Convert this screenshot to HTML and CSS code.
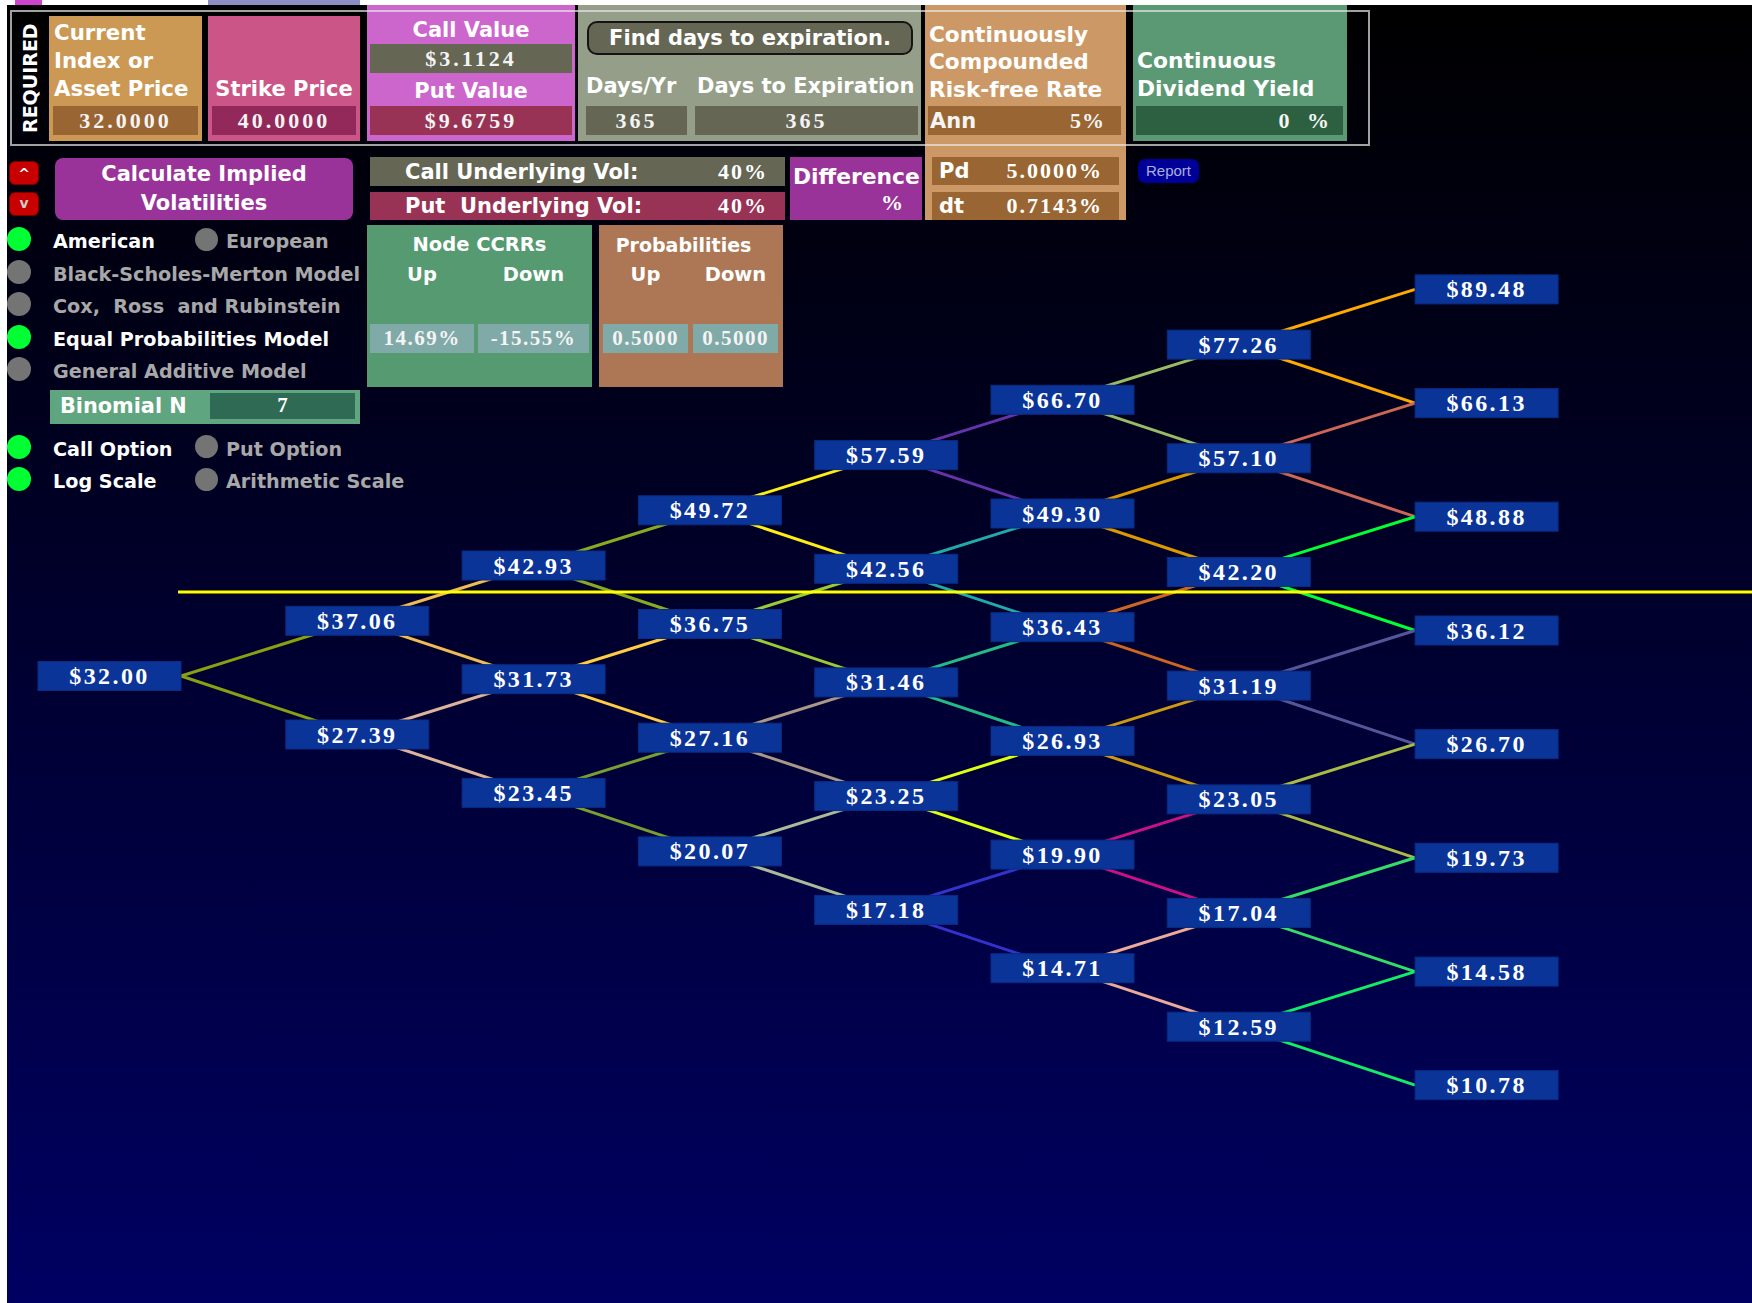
FILE: index.html
```
<html charset="utf-8">
  <head>
    <title>Binomial Option Tree</title>
    <link rel="stylesheet" href="styles.css">
  </head>
  <body>
    <div class="topstrip"><span class="stub stub-mag"></span><span class="stub stub-lav"></span></div>
    <div class="stage">
      <svg class="tree" viewBox="7 5 1745 1298" width="1745" height="1298">
        <g class="edges">
          <polyline stroke="#88a012" points="357.3,620.8 181,676 357.3,734.5"/>
          <polyline stroke="#eebb55" points="533.6,565.5 357.3,620.8 533.6,679.2"/>
          <polyline stroke="#ddb39c" points="533.6,679.2 357.3,734.5 533.6,792.9"/>
          <polyline stroke="#88aa22" points="709.9,510.3 533.6,565.5 709.9,624"/>
          <polyline stroke="#ffcc44" points="709.9,624 533.6,679.2 709.9,737.7"/>
          <polyline stroke="#77a030" points="709.9,737.7 533.6,792.9 709.9,851.4"/>
          <polyline stroke="#ffee11" points="886.2,455.1 709.9,510.3 886.2,568.8"/>
          <polyline stroke="#99cc33" points="886.2,568.8 709.9,624 886.2,682.4"/>
          <polyline stroke="#aa9988" points="886.2,682.4 709.9,737.7 886.2,796.1"/>
          <polyline stroke="#aabb99" points="886.2,796.1 709.9,851.4 886.2,909.9"/>
          <polyline stroke="#6633aa" points="1062.5,399.8 886.2,455.1 1062.5,513.5"/>
          <polyline stroke="#22aaaa" points="1062.5,513.5 886.2,568.8 1062.5,627.2"/>
          <polyline stroke="#22bb88" points="1062.5,627.2 886.2,682.4 1062.5,740.9"/>
          <polyline stroke="#ddff11" points="1062.5,740.9 886.2,796.1 1062.5,854.6"/>
          <polyline stroke="#3333cc" points="1062.5,854.6 886.2,909.9 1062.5,968.2"/>
          <polyline stroke="#99bb66" points="1238.8,344.6 1062.5,399.8 1238.8,458.3"/>
          <polyline stroke="#dd9900" points="1238.8,458.3 1062.5,513.5 1238.8,572"/>
          <polyline stroke="#cc6622" points="1238.8,572 1062.5,627.2 1238.8,685.6"/>
          <polyline stroke="#cc9911" points="1238.8,685.6 1062.5,740.9 1238.8,799.4"/>
          <polyline stroke="#cc1188" points="1238.8,799.4 1062.5,854.6 1238.8,912.9"/>
          <polyline stroke="#eeaa99" points="1238.8,912.9 1062.5,968.2 1238.8,1026.7"/>
          <polyline stroke="#ffaa00" points="1415.1,289.4 1238.8,344.6 1415.1,403.1"/>
          <polyline stroke="#cc6655" points="1415.1,403.1 1238.8,458.3 1415.1,516.7"/>
          <polyline stroke="#00ff33" points="1415.1,516.7 1238.8,572 1415.1,630.5"/>
          <polyline stroke="#555599" points="1415.1,630.5 1238.8,685.6 1415.1,744.1"/>
          <polyline stroke="#aabb44" points="1415.1,744.1 1238.8,799.4 1415.1,857.8"/>
          <polyline stroke="#33dd66" points="1415.1,857.8 1238.8,912.9 1415.1,971.6"/>
          <polyline stroke="#11ee66" points="1415.1,971.6 1238.8,1026.7 1415.1,1085.1"/>
        </g>
        <line class="strike" x1="178" y1="592" x2="1752" y2="592"/>
        <g class="nodes">
          <g transform="translate(109.5,676)"><rect x="-71.5" y="-14.5" width="143" height="29"/><text y="8">$32.00</text></g>

          <g transform="translate(357.3,620.8)"><rect x="-71.5" y="-14.5" width="143" height="29"/><text y="8">$37.06</text></g>
          <g transform="translate(357.3,734.5)"><rect x="-71.5" y="-14.5" width="143" height="29"/><text y="8">$27.39</text></g>

          <g transform="translate(533.6,565.5)"><rect x="-71.5" y="-14.5" width="143" height="29"/><text y="8">$42.93</text></g>
          <g transform="translate(533.6,679.2)"><rect x="-71.5" y="-14.5" width="143" height="29"/><text y="8">$31.73</text></g>
          <g transform="translate(533.6,792.9)"><rect x="-71.5" y="-14.5" width="143" height="29"/><text y="8">$23.45</text></g>

          <g transform="translate(709.9,510.3)"><rect x="-71.5" y="-14.5" width="143" height="29"/><text y="8">$49.72</text></g>
          <g transform="translate(709.9,624)"><rect x="-71.5" y="-14.5" width="143" height="29"/><text y="8">$36.75</text></g>
          <g transform="translate(709.9,737.7)"><rect x="-71.5" y="-14.5" width="143" height="29"/><text y="8">$27.16</text></g>
          <g transform="translate(709.9,851.4)"><rect x="-71.5" y="-14.5" width="143" height="29"/><text y="8">$20.07</text></g>

          <g transform="translate(886.2,455.1)"><rect x="-71.5" y="-14.5" width="143" height="29"/><text y="8">$57.59</text></g>
          <g transform="translate(886.2,568.8)"><rect x="-71.5" y="-14.5" width="143" height="29"/><text y="8">$42.56</text></g>
          <g transform="translate(886.2,682.4)"><rect x="-71.5" y="-14.5" width="143" height="29"/><text y="8">$31.46</text></g>
          <g transform="translate(886.2,796.1)"><rect x="-71.5" y="-14.5" width="143" height="29"/><text y="8">$23.25</text></g>
          <g transform="translate(886.2,909.9)"><rect x="-71.5" y="-14.5" width="143" height="29"/><text y="8">$17.18</text></g>

          <g transform="translate(1062.5,399.8)"><rect x="-71.5" y="-14.5" width="143" height="29"/><text y="8">$66.70</text></g>
          <g transform="translate(1062.5,513.5)"><rect x="-71.5" y="-14.5" width="143" height="29"/><text y="8">$49.30</text></g>
          <g transform="translate(1062.5,627.2)"><rect x="-71.5" y="-14.5" width="143" height="29"/><text y="8">$36.43</text></g>
          <g transform="translate(1062.5,740.9)"><rect x="-71.5" y="-14.5" width="143" height="29"/><text y="8">$26.93</text></g>
          <g transform="translate(1062.5,854.6)"><rect x="-71.5" y="-14.5" width="143" height="29"/><text y="8">$19.90</text></g>
          <g transform="translate(1062.5,968.2)"><rect x="-71.5" y="-14.5" width="143" height="29"/><text y="8">$14.71</text></g>

          <g transform="translate(1238.8,344.6)"><rect x="-71.5" y="-14.5" width="143" height="29"/><text y="8">$77.26</text></g>
          <g transform="translate(1238.8,458.3)"><rect x="-71.5" y="-14.5" width="143" height="29"/><text y="8">$57.10</text></g>
          <g transform="translate(1238.8,572)"><rect x="-71.5" y="-14.5" width="143" height="29"/><text y="8">$42.20</text></g>
          <g transform="translate(1238.8,685.6)"><rect x="-71.5" y="-14.5" width="143" height="29"/><text y="8">$31.19</text></g>
          <g transform="translate(1238.8,799.4)"><rect x="-71.5" y="-14.5" width="143" height="29"/><text y="8">$23.05</text></g>
          <g transform="translate(1238.8,912.9)"><rect x="-71.5" y="-14.5" width="143" height="29"/><text y="8">$17.04</text></g>
          <g transform="translate(1238.8,1026.7)"><rect x="-71.5" y="-14.5" width="143" height="29"/><text y="8">$12.59</text></g>

          <g transform="translate(1486.6,289.4)"><rect x="-71.5" y="-14.5" width="143" height="29"/><text y="8">$89.48</text></g>
          <g transform="translate(1486.6,403.1)"><rect x="-71.5" y="-14.5" width="143" height="29"/><text y="8">$66.13</text></g>
          <g transform="translate(1486.6,516.7)"><rect x="-71.5" y="-14.5" width="143" height="29"/><text y="8">$48.88</text></g>
          <g transform="translate(1486.6,630.5)"><rect x="-71.5" y="-14.5" width="143" height="29"/><text y="8">$36.12</text></g>
          <g transform="translate(1486.6,744.1)"><rect x="-71.5" y="-14.5" width="143" height="29"/><text y="8">$26.70</text></g>
          <g transform="translate(1486.6,857.8)"><rect x="-71.5" y="-14.5" width="143" height="29"/><text y="8">$19.73</text></g>
          <g transform="translate(1486.6,971.6)"><rect x="-71.5" y="-14.5" width="143" height="29"/><text y="8">$14.58</text></g>
          <g transform="translate(1486.6,1085.1)"><rect x="-71.5" y="-14.5" width="143" height="29"/><text y="8">$10.78</text></g>
        </g>
      </svg>

      <div class="frame"></div>

      <div class="panel">
        <div class="col-main">
          <div class="head-row">
            <div class="required">REQUIRED</div>
            <div class="field f-asset">
              <div class="label">Current<br>Index or<br>Asset Price</div>
              <div class="value v-tan">32.0000</div>
            </div>
            <div class="field f-strike">
              <div class="label">Strike Price</div>
              <div class="value v-maroon">40.0000</div>
            </div>
            <div class="field f-values">
              <div class="label">Call Value</div>
              <div class="value v-gray flush">$3.1124</div>
              <div class="label put-label">Put Value</div>
              <div class="value v-plum put-value">$9.6759</div>
            </div>
            <div class="field f-days">
              <div class="find">Find days to expiration.</div>
              <div class="days-grid">
                <div class="label">Days/Yr</div>
                <div class="label days-exp">Days to Expiration</div>
                <div class="value v-gray">365</div>
                <div class="value v-gray">365</div>
              </div>
            </div>
          </div>

          <div class="row2">
            <div class="arrows">
              <div class="arrow up">^</div>
              <div class="arrow down">v</div>
            </div>
            <div class="calc">Calculate Implied<br>Volatilities</div>
            <div class="vols">
              <div class="vol vol-call"><span>Call Underlying Vol:</span><span class="num">40%</span></div>
              <div class="vol vol-put"><span>Put&nbsp; Underlying Vol:</span><span class="num">40%</span></div>
            </div>
            <div class="diff">
              <div class="label">Difference</div>
              <div class="num diff-num">%</div>
            </div>
          </div>

          <div class="row3">
            <div class="options">
              <div class="opt-row">
                <div class="opt first"><span class="dot on"></span><span class="opt-label lit">American</span></div>
                <div class="opt"><span class="dot small"></span><span class="opt-label second">European</span></div>
              </div>
              <div class="opt-row"><div class="opt first"><span class="dot"></span><span class="opt-label">Black-Scholes-Merton Model</span></div></div>
              <div class="opt-row"><div class="opt first"><span class="dot"></span><span class="opt-label">Cox,&nbsp; Ross&nbsp; and Rubinstein</span></div></div>
              <div class="opt-row"><div class="opt first"><span class="dot on"></span><span class="opt-label lit">Equal Probabilities Model</span></div></div>
              <div class="opt-row"><div class="opt first"><span class="dot"></span><span class="opt-label">General Additive Model</span></div></div>
              <div class="binom">
                <span class="binom-label">Binomial N</span>
                <span class="binom-value">7</span>
              </div>
              <div class="opt-row">
                <div class="opt first"><span class="dot on"></span><span class="opt-label lit">Call Option</span></div>
                <div class="opt"><span class="dot small"></span><span class="opt-label second">Put Option</span></div>
              </div>
              <div class="opt-row">
                <div class="opt first"><span class="dot on"></span><span class="opt-label lit">Log Scale</span></div>
                <div class="opt"><span class="dot small"></span><span class="opt-label second">Arithmetic Scale</span></div>
              </div>
            </div>

            <div class="stats ccrr">
              <div class="label stats-title">Node CCRRs</div>
              <div class="stats-grid">
                <div class="label">Up</div>
                <div class="label">Down</div>
                <div class="value v-teal">14.69%</div>
                <div class="value v-teal">-15.55%</div>
              </div>
            </div>
            <div class="stats probs">
              <div class="label stats-title">Probabilities</div>
              <div class="stats-grid">
                <div class="label">Up</div>
                <div class="label">Down</div>
                <div class="value v-teal">0.5000</div>
                <div class="value v-teal">0.5000</div>
              </div>
            </div>
          </div>
        </div>

        <div class="f-rate">
          <div class="rate-top">
            <div class="label">Continuously<br>Compounded<br>Risk-free Rate</div>
            <div class="value v-tan split"><span class="unit">Ann</span><span>5%</span></div>
          </div>
          <div class="pd-rows">
            <div class="pd"><span>Pd</span><span class="num">5.0000%</span></div>
            <div class="pd"><span>dt</span><span class="num">0.7143%</span></div>
          </div>
        </div>

        <div class="col-side">
          <div class="field f-div">
            <div class="label">Continuous<br>Dividend Yield</div>
            <div class="value v-green right">0 %</div>
          </div>
          <div class="report">Report</div>
        </div>
      </div>
    </div>
  </body>
</html>
```

FILE: styles.css
```
body { margin: 0; background: #fff; font-family: "DejaVu Sans", sans-serif; }

.topstrip { display: flex; height: 5px; }
.stub-mag { margin-left: 15px; width: 27px; background: #cc44cc; }
.stub-lav { margin-left: 166px; width: 152px; background: #8d8dc6; }

.stage {
  position: relative;
  margin-left: 7px;
  height: 1298px;
  background: linear-gradient(#000000 0%, #00001c 30%, #000062 100%);
  overflow: hidden;
}

/* the tree */
.tree { position: absolute; left: 0; top: 0; }
.edges polyline { fill: none; stroke-width: 3; stroke-linejoin: bevel; }
.strike { stroke: #ffff00; stroke-width: 3; }
.nodes rect { fill: #0a3498; stroke: #072c84; stroke-width: 1; }
.nodes text {
  fill: #fff;
  font: bold 24px "Liberation Serif", serif;
  letter-spacing: 2.4px;
  text-anchor: middle;
}

/* the grey frame round the required inputs */
.frame {
  position: absolute;
  left: 3px; top: 5px;
  width: 1360px; height: 136px;
  box-sizing: border-box;
  border: 2px solid rgba(230, 230, 230, 0.7);
  pointer-events: none;
  z-index: 2;
}

.panel {
  position: relative;
  display: flex;
  align-items: flex-start;
  color: #fff;
  font: bold 21px "DejaVu Sans", sans-serif;
}
.col-main { width: 918px; flex: none; }

.label { line-height: 28px; white-space: nowrap; }
.value {
  height: 29px;
  margin-top: 3px;
  display: flex;
  align-items: center;
  justify-content: center;
  font: bold 22px "Liberation Serif", serif;
  letter-spacing: 3px;
  color: #f4f4f4;
}
.num { font: bold 22px "Liberation Serif", serif; letter-spacing: 2px; }
.v-tan { background: #996633; }
.v-maroon { background: #93285a; }
.v-gray { background: #666655; }
.v-plum { background: #993355; }
.v-green { background: #2d6040; }
.v-teal { background: #80aaa8; }

/* header fields */
.head-row { display: flex; align-items: flex-start; height: 136px; }
.required {
  margin: 7px 0 0 6px;
  width: 34px; height: 132px;
  writing-mode: vertical-rl;
  transform: rotate(180deg);
  text-align: center;
  line-height: 34px;
  font-size: 19px;
}
.field {
  display: flex;
  flex-direction: column;
  justify-content: flex-end;
  box-sizing: border-box;
  padding: 0 4px 6px;
  flex: none;
}
.f-asset { margin: 11px 0 0 2px; width: 153px; height: 125px; background: #cc9955; }
.f-asset .label { padding-left: 1px; font-size: 21.3px; }
.f-strike { margin: 11px 0 0 6px; width: 152px; height: 125px; background: #cc5588; text-align: center; }
.f-values {
  margin-left: 7px; width: 208px; height: 136px;
  background: #cc66cc;
  justify-content: flex-start;
  padding: 11px 3px 6px;
  text-align: center;
}
.f-values .flush { margin-top: 0; }
.f-values .put-label { margin-top: 4px; }
.f-values .put-value { margin-top: 1px; }

.f-days {
  margin-left: 3px; width: 343px; height: 136px;
  background: #949e88;
  justify-content: space-between;
  padding: 16px 3px 6px 8px;
}
.find {
  margin-left: 1px;
  width: 326px; height: 34px;
  box-sizing: border-box;
  background: #666655;
  border: 2px solid #141414;
  border-radius: 10px;
  text-align: center;
  line-height: 30px;
}
.days-grid { display: grid; grid-template-columns: 101px 223px; column-gap: 8px; }
.days-grid .value { margin-top: 6px; }
.days-exp { padding-left: 2px; }

.f-rate {
  flex: none;
  width: 201px; height: 215px;
  background: #cc9966;
}
.rate-top {
  height: 136px;
  box-sizing: border-box;
  display: flex;
  flex-direction: column;
  justify-content: flex-end;
  padding: 0 5px 6px 3px;
}
.rate-top .label { line-height: 27.5px; padding-left: 1px; font-size: 21.6px; }
.split { justify-content: space-between; padding: 0 16px 0 2px; letter-spacing: 1px; }
.unit { font: bold 21px "DejaVu Sans", sans-serif; letter-spacing: 0; }
.pd-rows { padding: 16px 7px 0; }
.pd {
  height: 28px;
  display: flex;
  align-items: center;
  justify-content: space-between;
  padding: 0 16px 0 7px;
  background: #996633;
}
.pd + .pd { margin-top: 7px; }

.col-side { margin-left: 7px; width: 214px; flex: none; }
.f-div { width: 214px; height: 136px; background: #5b9974; padding: 0 4px 6px 3px; }
.f-div .label { padding-left: 1px; font-size: 21.8px; }
.right { justify-content: flex-end; padding-right: 11px; word-spacing: 6px; }
.report {
  margin: 18px 0 0 5px;
  width: 61px; height: 24px;
  background: #000099;
  border-radius: 7px;
  color: #aab0dd;
  font: 15px "Liberation Sans", sans-serif;
  line-height: 24px;
  text-align: center;
}

/* second row */
.row2 { display: flex; align-items: flex-start; margin-top: 16px; }
.arrows { margin-left: 2px; width: 30px; padding-top: 4px; }
.arrow {
  height: 24px;
  box-sizing: border-box;
  background: #c80000;
  border: 1px solid #7a0000;
  border-radius: 6px;
  text-align: center;
  font-size: 14px;
  line-height: 24px;
}
.arrow.down { margin-top: 7px; color: #cccccc; line-height: 20px; }
.calc {
  margin: 1px 0 0 16px;
  width: 298px; height: 62px;
  background: #993399;
  border-radius: 8px;
  display: flex;
  align-items: center;
  justify-content: center;
  text-align: center;
  line-height: 29px;
}
.vols { margin-left: 17px; width: 415px; }
.vol {
  height: 29px;
  display: flex;
  align-items: center;
  justify-content: space-between;
  padding: 0 17px 0 35px;
}
.vol-call { background: #666655; }
.vol-put { height: 28px; margin-top: 6px; background: #993355; }
.diff {
  margin-left: 5px;
  width: 132px; height: 63px;
  box-sizing: border-box;
  background: #993399;
  padding: 6px 17px 0 3px;
}
.diff .label { font-size: 21.8px; }
.diff-num { text-align: right; line-height: 24px; }

/* third row */
.row3 { display: flex; align-items: flex-start; margin-top: 5px; }
.options { width: 353px; margin-top: -2px; flex: none; }
.opt-row { display: flex; align-items: center; height: 32.5px; }
.opt { display: flex; align-items: center; }
.dot { width: 24px; height: 24px; border-radius: 50%; background: #747474; flex: none; }
.dot.on { background: #00ff33; }
.dot.small { width: 23px; height: 23px; }
.opt-label {
  color: #a8a8a8;
  white-space: nowrap;
  margin-left: 22px;
  padding-top: 5px;
  font-size: 19.2px;
}
.first .opt-label { min-width: 142px; }
.opt-label.second { margin-left: 8px; }
.opt-label.lit { color: #fff; }

.binom {
  display: flex;
  align-items: center;
  margin: 4px 0 7px 43px;
  width: 310px; height: 34px;
  box-sizing: border-box;
  padding: 3px 5px 5px 10px;
  background: #5fa680;
  font-size: 20.8px;
}
.binom-label { width: 150px; }
.binom-value {
  flex: 1;
  align-self: stretch;
  background: #2f6a55;
  text-align: center;
  line-height: 24px;
  font: bold 21px "Liberation Serif", serif;
}

.stats {
  flex: none;
  margin-left: 7px;
  height: 162px;
  box-sizing: border-box;
  padding: 6px 3px 0;
  font-size: 19.5px;
}
.ccrr { width: 225px; background: #559a70; }
.probs { width: 184px; background: #ad7756; padding: 6px 5px 0 4px; }
.probs .stats-title { font-size: 19px; padding-right: 14px; }
.stats-title { text-align: center; }
.stats-grid { display: grid; grid-template-columns: 104px 111px; column-gap: 4px; margin-top: 2px; text-align: center; }
.probs .stats-grid { grid-template-columns: 85px 85px; column-gap: 5px; }
.stats-grid .value { margin-top: 35px; letter-spacing: 1.5px; font-size: 21px; }
```
